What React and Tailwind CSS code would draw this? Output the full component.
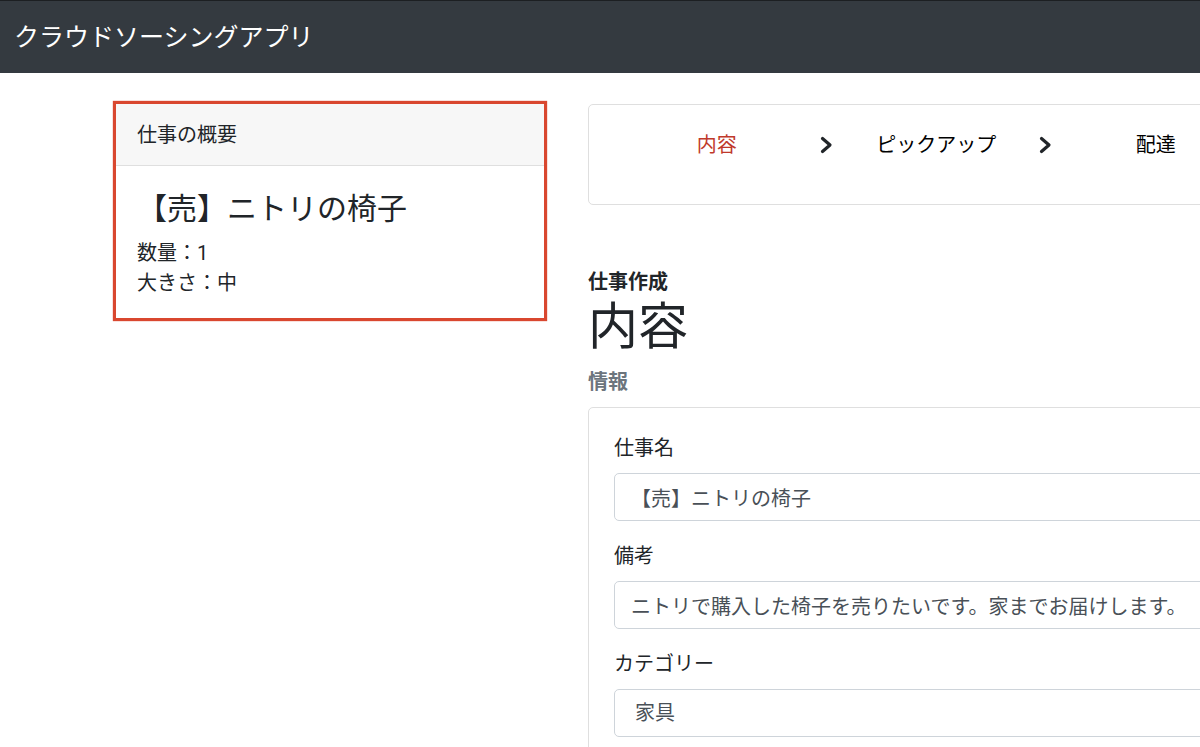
import React from "react";

const Chevron = () => (
  <svg className="w-[14px] h-[18px] shrink-0" viewBox="0 0 14 18" fill="none">
    <path d="M2.5 2.5 L10 9 L2.5 15.5" stroke="#212529" strokeWidth="3.2" strokeLinecap="round" strokeLinejoin="round" />
  </svg>
);

const Step = ({ label, active }) => (
  <div className={`w-[205.5px] shrink-0 text-center ${active ? "text-[#c0392b]" : "text-black"}`}>{label}</div>
);

const Field = ({ label, children }) => (
  <div className="mb-[20px]">
    <label className="block mb-[10px]">{label}</label>
    {children}
  </div>
);

const inputClass =
  "block w-full h-[48px] px-[16px] border border-[#ced4da] rounded-[5px] bg-white text-[#495057] outline-none";

const App = () => {
  return (
    <div
      lang="ja"
      className="h-[747px] overflow-hidden bg-white text-[20px] leading-[30px] text-[#212529] [font-family:'Roboto','Noto_Sans_CJK_JP',sans-serif]"
    >
      <nav className="h-[73px] flex items-center pl-[14px] pt-[1px] bg-[#343a40] border-t border-[#1c1f22] text-[25px] text-white">
        クラウドソーシングアプリ
      </nav>

      <div className="flex items-start gap-[41px] pl-[113px] pt-[28px]">
        <div className="w-[434px] shrink-0 border-[3px] border-[#d9472f] shadow-[0_0_1px_#d9472f]">
          <div className="h-[62px] flex items-center px-[21px] bg-[#f7f7f7] border-b border-[#dfdfdf]">仕事の概要</div>
          <div className="px-[21px] pt-[25px] pb-[20px]">
            <h3 className="text-[30px] leading-[36px] mb-[11px]">【売】ニトリの椅子</h3>
            <p>数量：1</p>
            <p>大きさ：中</p>
          </div>
        </div>

        <div className="w-[800px] shrink-0 pt-[3px]">
          <div className="flex items-center h-[101px] pl-[25px] pt-[25px] pb-[45px] border border-[#dfdfdf] rounded-[5px]">
            <Step label="内容" active />
            <Chevron />
            <Step label="ピックアップ" />
            <Chevron />
            <Step label="配達" />
          </div>

          <h6 className="mt-[62px] font-bold">仕事作成</h6>
          <h1 className="text-[50px] leading-[60px]">内容</h1>
          <h6 className="mt-[10px] mb-[10px] font-bold text-[#6c757d]">情報</h6>

          <div className="border border-[#dfdfdf] rounded-[5px] px-[25px] pt-[25px]">
            <Field label="仕事名">
              <input className={inputClass} readOnly value="【売】ニトリの椅子" />
            </Field>
            <Field label="備考">
              <input className={inputClass} readOnly value="ニトリで購入した椅子を売りたいです。家までお届けします。" />
            </Field>
            <Field label="カテゴリー">
              <select className={`${inputClass} appearance-none pl-[20px]`} defaultValue="家具">
                <option>家具</option>
              </select>
            </Field>
          </div>
        </div>
      </div>
    </div>
  );
};

export default App;
